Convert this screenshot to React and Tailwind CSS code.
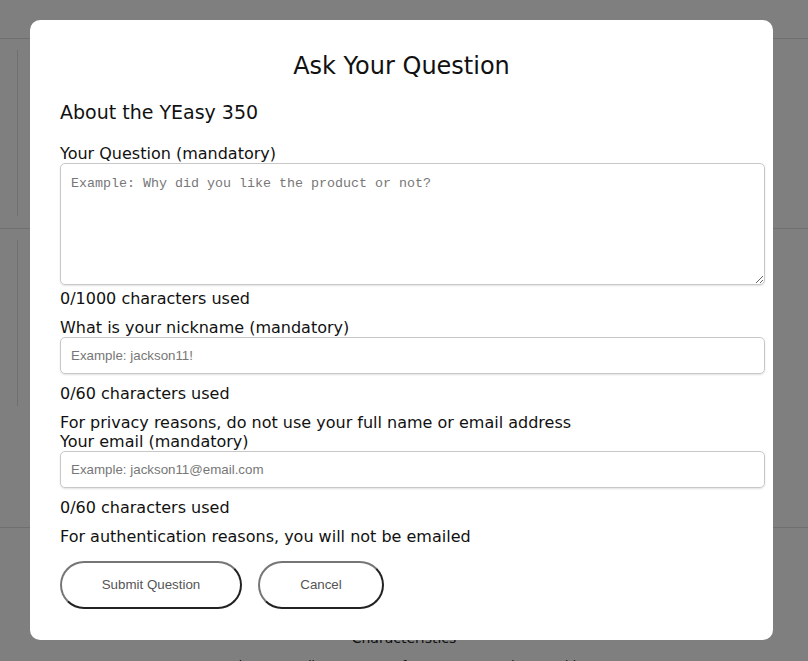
export default function App() {
  const body = { fontFamily: '"DejaVu Sans", sans-serif' };
  return (
    <div className="relative min-h-[661px] bg-white overflow-hidden" style={body}>
      {/* background page */}
      <div className="h-[39px] border-b border-[#dedede]" />
      <div className="pl-[17px] pt-[11px] pb-[12px] border-b border-[#dedede]">
        <div className="h-[166px] border-l border-[#dedede]" />
      </div>
      <div className="pl-[17px] pt-[11px] pb-[121px] border-b border-[#dedede]">
        <div className="h-[166px] border-l border-[#dedede]" />
      </div>
      <div className="pt-[100px] flex flex-col items-center text-[#222]">
        <div className="text-[14px]">Characteristics</div>
        <div className="mt-[8px] flex gap-[68px] text-[12px] pr-[4px]">
          <span>A size too small</span>
          <span>Perfect</span>
          <span>A size too wide</span>
        </div>
      </div>

      {/* overlay */}
      <div className="absolute inset-0 bg-black/50 flex justify-start items-start pt-[20px] pl-[30px]">
        <div className="w-[743px] bg-white rounded-[10px] pl-[30px] pr-[8px] pt-[31px] pb-[31px] text-[#111]">
          <h1 className="text-center text-[24px] leading-[30px] ml-[-22px]">Ask Your Question</h1>
          <h2 className="mt-[19px] text-[19px] leading-[24px]">About the YEasy 350</h2>
          <div className="mt-[20px] text-[16px] leading-[19px]">
            <div>Your Question (mandatory)</div>
            <textarea
              className="block w-full h-[122px] border border-[#c8c8c8] rounded-[5px] px-[10px] py-[10px] text-[13.33px] placeholder-[#777] shadow-[0_1px_2px_rgba(0,0,0,0.12)]"
              style={{ fontFamily: '"Liberation Mono", monospace' }}
              placeholder="Example: Why did you like the product or not?"
            />
            <div className="mt-[4px]">0/1000 characters used</div>
            <div className="mt-[10px]">What is your nickname (mandatory)</div>
            <input
              className="block w-full h-[37px] border border-[#c8c8c8] rounded-[5px] px-[10px] text-[13.33px] placeholder-[#777] shadow-[0_1px_2px_rgba(0,0,0,0.12)]"
              style={{ fontFamily: '"Liberation Sans", Arial, sans-serif' }}
              placeholder="Example: jackson11!"
            />
            <div className="mt-[10px]">0/60 characters used</div>
            <div className="mt-[10px]">For privacy reasons, do not use your full name or email address</div>
            <div>Your email (mandatory)</div>
            <input
              className="block w-full h-[37px] border border-[#c8c8c8] rounded-[5px] px-[10px] text-[13.33px] placeholder-[#777] shadow-[0_1px_2px_rgba(0,0,0,0.12)]"
              style={{ fontFamily: '"Liberation Sans", Arial, sans-serif' }}
              placeholder="Example: jackson11@email.com"
            />
            <div className="mt-[10px]">0/60 characters used</div>
            <div className="mt-[10px]">For authentication reasons, you will not be emailed</div>
          </div>
          <div className="mt-[15px] flex gap-[16px]" style={{ fontFamily: '"Liberation Sans", Arial, sans-serif' }}>
            <button className="w-[182px] h-[48px] rounded-full border-2 border-[#767676] border-b-[#222] border-r-[#222] bg-white text-[13.33px] text-[#555]">
              Submit Question
            </button>
            <button className="w-[126px] h-[48px] rounded-full border-2 border-[#767676] border-b-[#222] border-r-[#222] bg-white text-[13.33px] text-[#555]">
              Cancel
            </button>
          </div>
        </div>
      </div>
    </div>
  );
}
